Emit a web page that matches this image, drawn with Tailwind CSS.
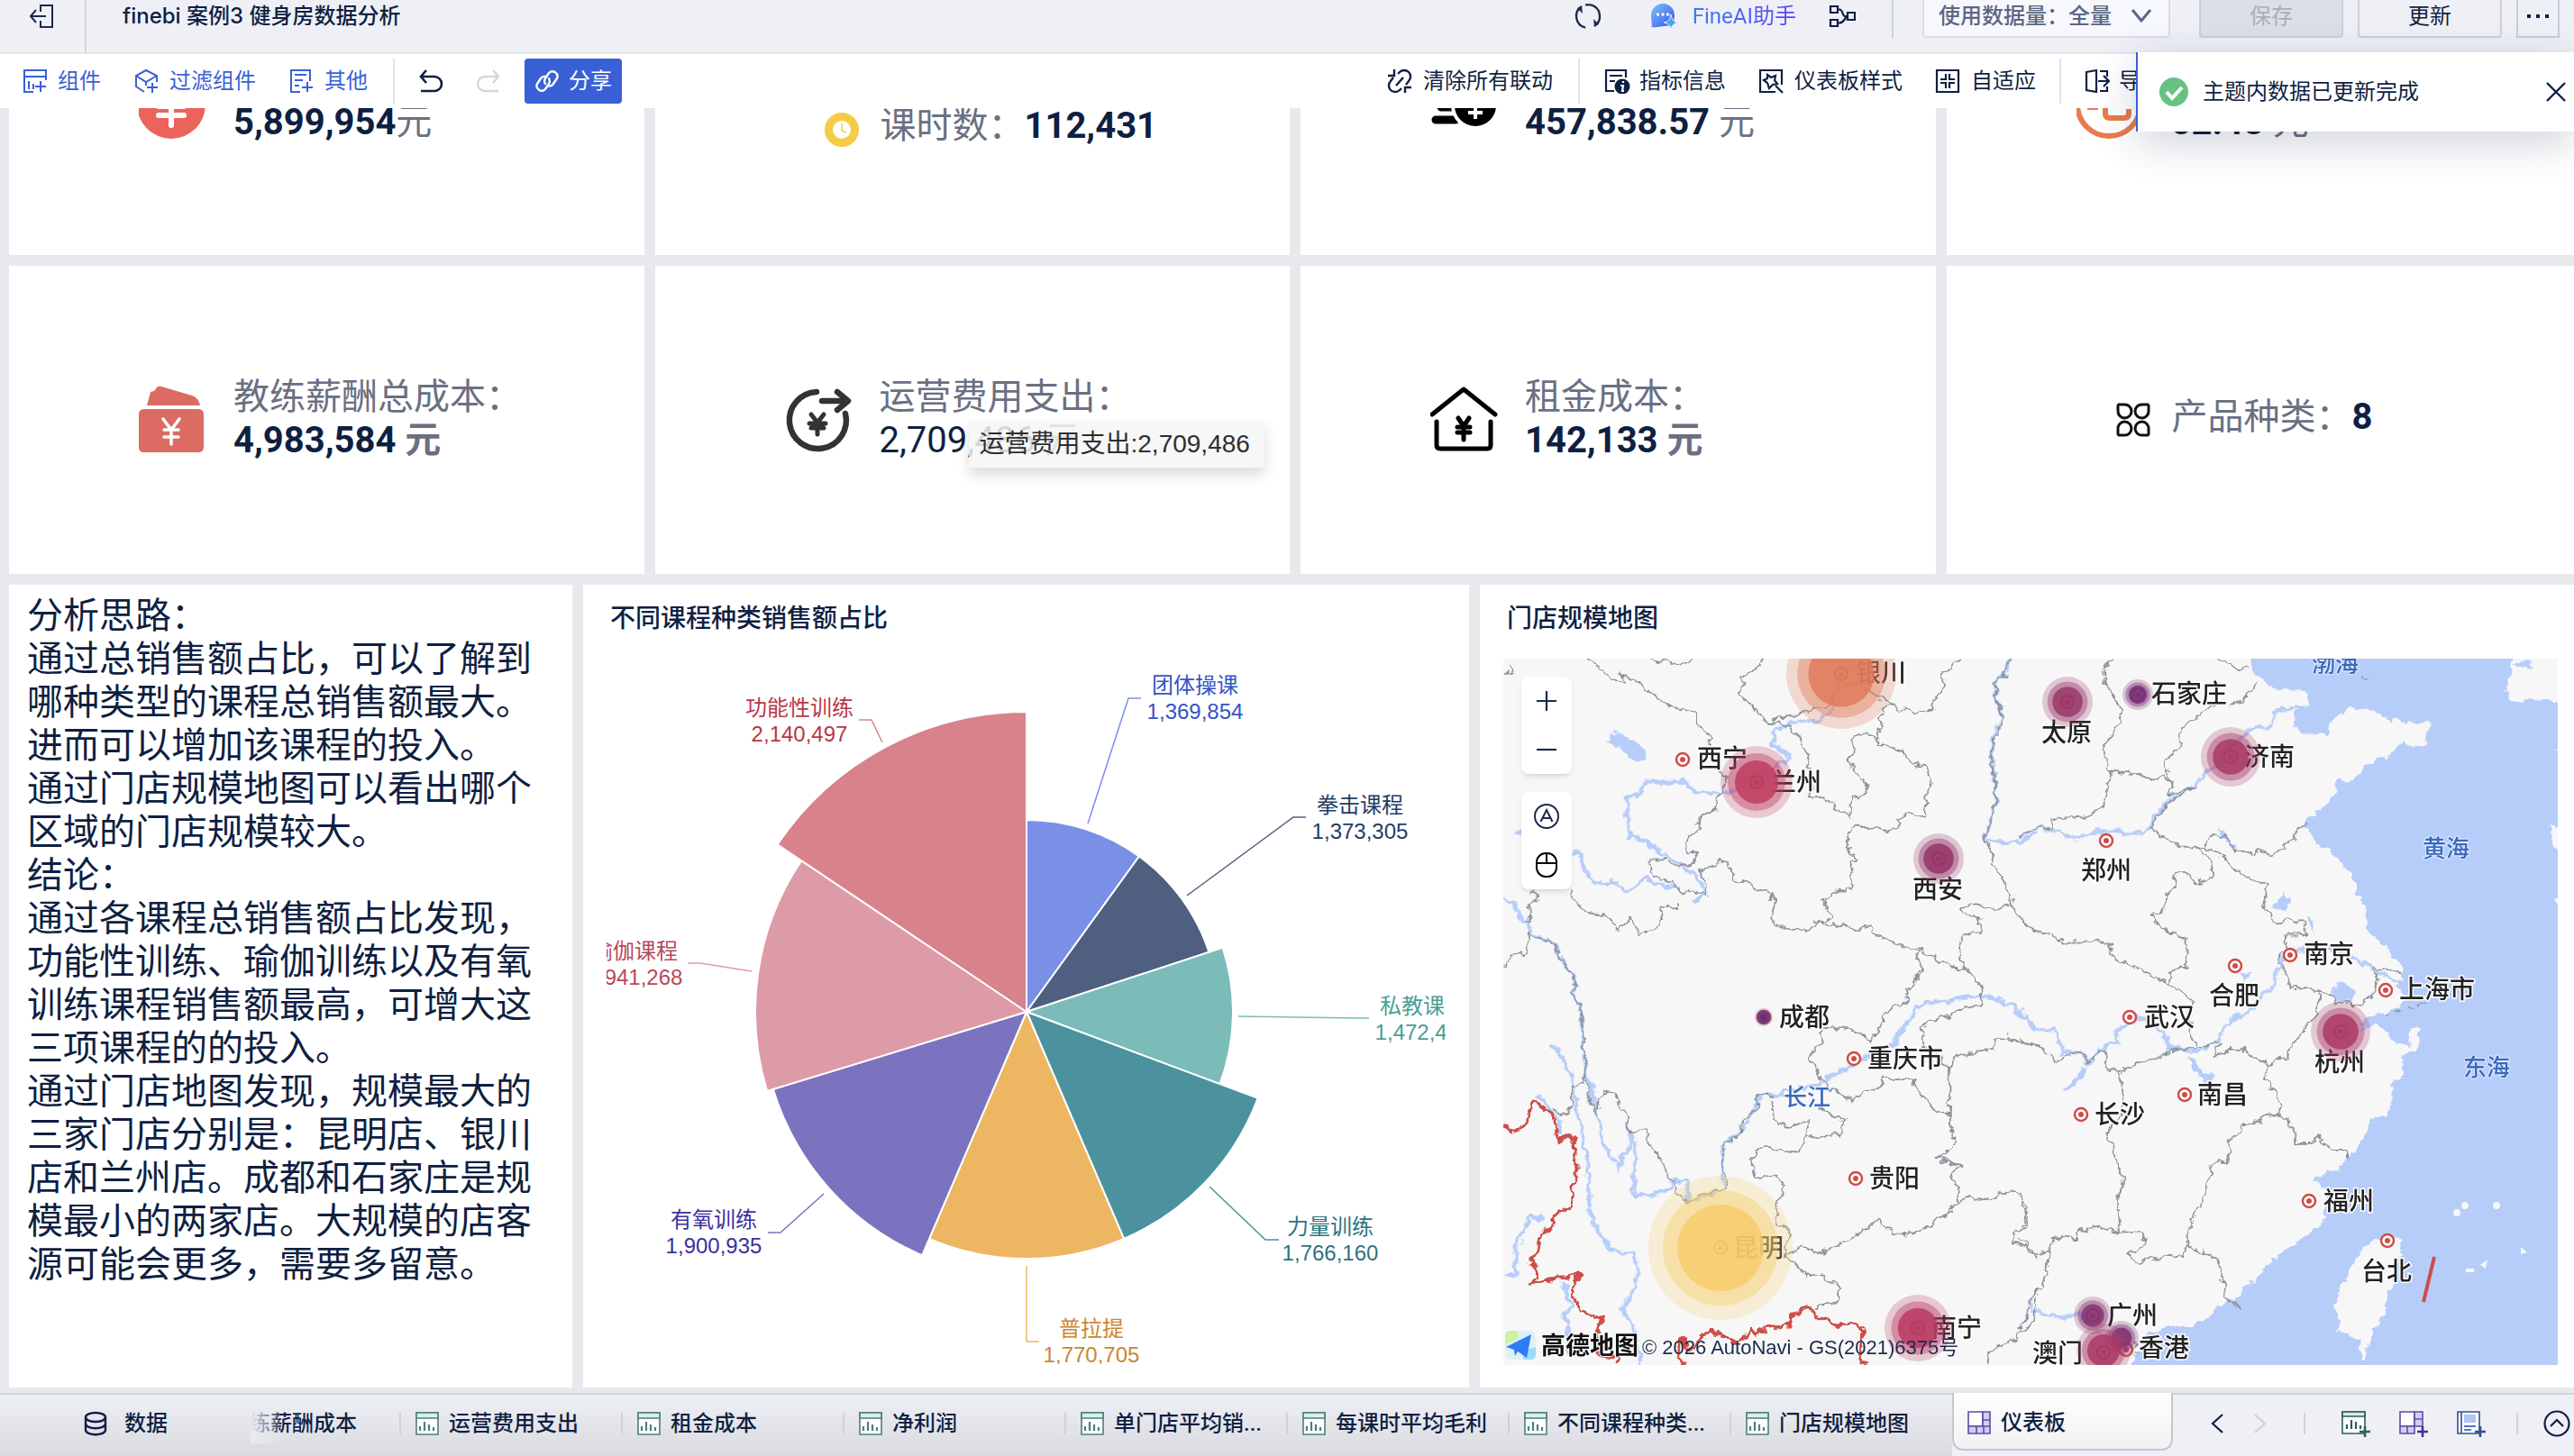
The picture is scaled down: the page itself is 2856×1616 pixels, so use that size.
<!DOCTYPE html>
<html lang="zh-CN">

<head>
    <meta charset="UTF-8">
    <meta name="viewport" content="width=device-width, initial-scale=1.0">
    <script src="https://cdn.jsdelivr.net/npm/@tailwindcss/browser@4"></script>
    <title>finebi 案例3 健身房数据分析</title>
</head>

<body class="flex h-screen flex-col overflow-hidden bg-[#e8e9ed] font-['Roboto','Noto_Sans_CJK_SC',sans-serif] text-2xl text-[#0f1f42]">

    <!-- Header -->
    <header class="z-10 h-[60px] shrink-0 border-b-2 border-[#e4e6ec] bg-[#eff0f6]">
        <div class="flex h-9 items-center whitespace-nowrap">
            <button class="flex h-[58px] w-24 shrink-0 items-center self-start border-r-2 border-[#d3d5dc] pb-[22px] pl-8" aria-label="退出">
                <svg class="size-7" viewBox="0 0 28 28" fill="none" stroke="#1b2a4c" stroke-width="2">
                    <path d="M13 9V2h13v24H13v-7M19 14H3M8 7l-6 7 6 7" />
                </svg>
            </button>
            <h1 class="ml-10 font-['Inter','Noto_Sans_CJK_SC',sans-serif] font-medium">finebi 案例3 健身房数据分析</h1>

            <div class="ml-auto flex items-center pr-4">
                <button aria-label="刷新">
                    <svg class="size-8" viewBox="0 0 32 32" fill="none" stroke="#1b2a4c" stroke-width="2.4">
                        <path d="M9 5A13 13 0 0 0 13 28.600M23 27A13 13 0 0 0 19 3.400M13 3.400L19 3.400" />
                        <path d="M4 7l5-2 1 8zM28 25l-5 2-1-8z" fill="#1b2a4c" stroke="none" />
                    </svg>
                </button>
                <button class="ml-[54px] flex items-center gap-4">
                    <svg class="size-[30px]" viewBox="0 0 30 30">
                        <defs>
                            <linearGradient id="ai" x1="0" y1="0" x2="1" y2="1">
                                <stop offset="0" stop-color="#7cc6f8" />
                                <stop offset="1" stop-color="#3551f0" />
                            </linearGradient>
                        </defs>
                        <path d="M0 27c2-2 0-5 0-13a13 13 0 0 1 26 0c0 8-4 12-11 12-5 0-8 2-15 1z" fill="url(#ai)" />
                        <circle cx="7.500" cy="13" r="1.700" fill="#fff" />
                        <circle cx="13" cy="13" r="1.700" fill="#fff" />
                        <circle cx="18.500" cy="13" r="1.700" fill="#fff" />
                        <path d="M22 13c1 6 3 8 8 9-5 1-7 3-8 8-1-5-3-7-8-8 5-1 7-3 8-9z" fill="#46a6f5" stroke="#eff0f6" />
                    </svg>
                    <span class="bg-linear-to-r from-[#3b7bf6] to-[#5a3ff2] bg-clip-text text-transparent">FineAI助手</span>
                </button>
                <button class="ml-9" aria-label="血缘">
                    <svg class="size-[30px]" viewBox="0 0 30 30" fill="none" stroke="#0f1f42" stroke-width="2.200">
                        <path d="M2 4h8v7H2zM2 19h8v7H2zM21 11h8v8h-8zM10 7.500h2c4 0 3 7.500 6 7.500s-2 7.500-6 7.500h-2M17 15h4" />
                    </svg>
                </button>
                <span class="ml-10 h-12 w-0.5 bg-[#cfd2da]"></span>
                <label class="relative ml-8 flex items-center">
                    <span class="sr-only">使用数据量</span>
                    <select class="h-12 w-[275px] appearance-none rounded border-2 border-[#dadde8] bg-[#f7f8fd] pl-4 font-medium text-[#5b6683]">
                        <option>使用数据量：全量</option>
                    </select>
                    <svg class="absolute right-5 h-5 w-6" viewBox="0 0 24 20" fill="none" stroke="#5b6683" stroke-width="3">
                        <path d="M2 3l10 12L22 3" />
                    </svg>
                </label>
                <button class="ml-8 h-12 w-40 rounded border-2 border-[#cdd0d8] bg-[#dcdfe7] text-[#a9aebb]" disabled>保存</button>
                <button class="ml-4 h-12 w-40 rounded border-2 border-[#cdd0d8]">更新</button>
                <button class="ml-4 flex h-12 w-12 items-center justify-center border-2 border-[#c6cedb]" aria-label="更多">
                    <svg class="h-1 w-6" viewBox="0 0 24 4" fill="#0f1f42">
                        <path d="M0 0h4v4H0zM10 0h4v4h-4zM20 0h4v4h-4z" />
                    </svg>
                </button>
            </div>
        </div>
    </header>

    <!-- Toolbar -->
    <div class="z-10 flex h-[60px] shrink-0 items-center bg-white pl-6 whitespace-nowrap">
        <div class="flex items-center gap-9 text-[#3a5fd7]">
            <button class="flex items-center gap-3">
                <svg class="size-7" viewBox="0 0 28 28" fill="none" stroke="currentColor" stroke-width="2">
                    <path d="M27 13V2H3v24h10M3 9h24M8 14v9M13 17v6M21 14v12M15 20h12" />
                </svg>组件
            </button>
            <button class="flex items-center gap-3">
                <svg class="size-7" viewBox="0 0 28 28" fill="none" stroke="currentColor" stroke-width="2">
                    <path d="M26 15V8L14 2 3 8v12l9 6M3 8l11 7 12-7M14 15v4M21 16v11M15 21h12" />
                </svg>过滤组件
            </button>
            <button class="flex items-center gap-3">
                <svg class="size-7" viewBox="0 0 28 28" fill="none" stroke="currentColor" stroke-width="2">
                    <path d="M24 14V2H3v24h10M7 7h13M7 13h9M7 19h5M21 15v11M15 21h12" />
                </svg>其他
            </button>
        </div>
        <span class="ml-7 h-[50px] w-0.5 bg-[#e4e6ea]"></span>
        <button class="ml-[26px]" aria-label="撤销">
            <svg class="size-7" viewBox="0 0 28 28" fill="none" stroke="#0f1f42" stroke-width="2.600">
                <path d="M9 2L3 9l6 7M3 9h15a8 8 0 0 1 0 16H3" />
            </svg>
        </button>
        <button class="ml-9" aria-label="重做" disabled>
            <svg class="size-7" viewBox="0 0 28 28" fill="none" stroke="#d3d6dc" stroke-width="2.400">
                <path d="M19 2l6 7-6 7M25 9H10a8 8 0 0 0 0 16h15" />
            </svg>
        </button>
        <button class="ml-[26px] flex h-[50px] items-center gap-2.5 rounded bg-[#3a60d7] px-[11px] text-white">
            <svg class="size-7" viewBox="0 0 28 28" fill="none" stroke="currentColor" stroke-width="2.400" stroke-linecap="round">
                <path d="M12 17a6 6 0 0 1 0-6l4-6a5.500 5.500 0 0 1 9 6l-4 6a5 5 0 0 1-6 2M16 11a6 6 0 0 1 0 6l-4 6a5.500 5.500 0 0 1-9-6l4-6a5 5 0 0 1 5-2" />
            </svg>分享
        </button>

        <div class="ml-auto flex items-center pr-[457px]">
            <button class="flex items-center gap-3">
                <svg class="size-7" viewBox="0 0 28 28" fill="none" stroke="currentColor" stroke-width="2.400">
                    <path d="M12 6l2-2a7 7 0 0 1 10 10l-3 4M16 22l-2 2A7 7 0 0 1 4 14l3-4M18 10l-8 9M8 1v7H1M20 27v-6h7" />
                </svg>清除所有联动
            </button>
            <span class="ml-7 h-[50px] w-0.5 bg-[#e0e2e8]"></span>
            <button class="ml-[26px] flex items-center gap-2.5">
                <svg class="h-7 w-[30px]" viewBox="0 0 30 28" fill="none" stroke="currentColor" stroke-width="2.200">
                    <path d="M25 10V2H3v23h9M7 8h14M7 14h6" />
                    <circle cx="21" cy="20" r="8.500" fill="#0f1f42" stroke="none" />
                    <path d="M22 14v2M19 19h3l-1 6h2" stroke="#fff" />
                </svg>指标信息
            </button>
            <button class="ml-9 flex items-center gap-3">
                <svg class="size-7" viewBox="0 0 28 28" fill="none" stroke="currentColor" stroke-width="2.200">
                    <path d="M26 18V2H2v24h17M10 7l4 3 5-2-1 5 3 4-5 1-4 4-2-6-4-3 4-2zM19 19l8 8" />
                </svg>仪表板样式
            </button>
            <button class="ml-9 flex items-center gap-3">
                <svg class="size-7" viewBox="0 0 28 28" fill="none" stroke="currentColor" stroke-width="2.200">
                    <path d="M2 2h24v24H2zM12 6v6H6M16 6v6h6M12 22v-6H6M16 22v-6h6" />
                </svg>自适应
            </button>
            <span class="ml-[26px] h-[50px] w-0.5 bg-[#e0e2e8]"></span>
            <button class="ml-[26px] flex items-center gap-2.5">
                <svg class="size-7" viewBox="0 0 28 28" fill="none" stroke="currentColor" stroke-width="2.200">
                    <path d="M2 4l11-2v24L2 24zM17 3h8v6M17 25h8v-5M15 14h12M21 8l6 6-6 6" />
                </svg>导出
            </button>
        </div>
    </div>

    <!-- Dashboard -->
    <main class="-mt-[179px] -mr-2 flex flex-1 flex-col gap-3 pb-1.5 pl-2.5">
        <section class="grid grid-cols-4 gap-3 text-[40px] leading-[48px] text-[#6a7082]">
            <div class="flex h-[342px] items-center gap-[29px] bg-white pl-36">
                <svg class="mt-2 size-[76px]" viewBox="0 0 76 76" fill="none">
                    <circle cx="36" cy="38" r="38" fill="#ec635c" />
                    <path d="M26 14l10 14 10-14M36 28v33M22 40h28M22 50h28" stroke="#fff" stroke-width="6" stroke-linecap="round" />
                </svg>
                <p>&nbsp;<br><b class="text-[#0f1f42]">5,899,954</b>元</p>
            </div>
            <div class="flex h-[342px] items-center gap-6 bg-white pt-14 pl-[188px]">
                <svg class="mt-2 size-[38px]" viewBox="0 0 38 38" fill="none">
                    <circle cx="19" cy="19" r="14.500" stroke="#f6cb45" stroke-width="9" />
                    <path d="M19 12v8l5 2" stroke="#f6cb45" stroke-width="1.600" />
                </svg>
                <p>课时数：<b class="text-[#0f1f42]">112,431</b></p>
            </div>
            <div class="flex h-[342px] items-center gap-[29px] bg-white pl-36">
                <svg class="size-[76px]" viewBox="0 0 76 76" fill="none">
                    <path d="M12 45h24M6 59h22" stroke="#000" stroke-width="9" stroke-linecap="round" />
                    <circle cx="50" cy="43" r="25" fill="#000" stroke="#fff" stroke-width="4" />
                    <path d="M43 26l7 10 7-10M50 36v22M42 43h16M42 51h16" stroke="#fff" stroke-width="4" />
                </svg>
                <p>&nbsp;<br><b class="text-[#0f1f42]">457,838.57</b> 元</p>
            </div>
            <div class="flex h-[342px] items-center gap-[29px] bg-white pl-36">
                <svg class="mt-2 size-[76px]" viewBox="0 0 76 76" fill="none" stroke="#e67c4d" stroke-width="6">
                    <circle cx="36" cy="38" r="35" />
                    <path d="M12 41h12M32 28v20q0 5 5 5h16q5 0 5-5v-5" />
                </svg>
                <p>&nbsp;<br><b class="text-[#0f1f42]">52.48</b> 元</p>
            </div>

            <div class="flex h-[342px] items-center gap-[29px] bg-white pl-36">
                <svg class="size-[76px]" viewBox="0 0 76 76">
                    <path d="M9 22l4-15 4-1 3-4q2-2 5-1l34 10q8 3 9 11zM6 26h60q6 0 6 6v36q0 6-6 6H6q-6 0-6-6V32q0-6 6-6z" fill="#db6b63" />
                    <path d="M27 37l9 12 9-12M36 49v16M28 49h16M28 57h16" fill="none" stroke="#fff" stroke-width="3.500" stroke-linecap="round" />
                </svg>
                <p class="pb-0.5">教练薪酬总成本：<br><b><span class="text-[#0f1f42]">4,983,584</span> 元</b></p>
            </div>
            <div class="relative flex h-[342px] items-center gap-[29px] bg-white pl-36">
                <svg class="size-[76px]" viewBox="0 0 76 76" fill="none" stroke="#333" stroke-width="6.500" stroke-linecap="round" stroke-linejoin="round">
                    <path d="M35 7A31.500 31.500 0 1 0 67 31M41 17h28M58 7l12 10-12 10" />
                    <path d="M29 32l7 9 7-9M36 41v13M27 42h18M29 47h14" stroke-width="5" />
                </svg>
                <p class="pb-0.5">运营费用支出：<br><span class="text-[#0f1f42]">2,709,486</span> 元</p>
                <!-- hover tip -->
                <div class="absolute top-[172px] left-[348px] w-[328px] bg-[#f6f6f7]/85 px-3 py-2 font-['Liberation_Sans','Noto_Sans_CJK_SC',sans-serif] text-[28px] leading-9 text-[#2e2e2e] shadow-[0_8px_14px_rgba(0,0,0,0.14)]" role="tooltip">运营费用支出:2,709,486</div>
            </div>
            <div class="flex h-[342px] items-center gap-[29px] bg-white pl-36">
                <svg class="size-[76px]" viewBox="0 0 76 76" fill="none" stroke="#000" stroke-width="5" stroke-linecap="round" stroke-linejoin="round">
                    <path d="M2 32L37 4l35 28M7 40v26q0 4 4 4h52q4 0 4-4V40" />
                    <path d="M31 36l6 9 6-9M37 45v15M30 46h14M30 52h14" />
                </svg>
                <p class="pb-0.5">租金成本：<br><b><span class="text-[#0f1f42]">142,133</span> 元</b></p>
            </div>
            <div class="flex h-[342px] items-center gap-6 bg-white pl-[188px]">
                <svg class="size-[38px]" viewBox="0 0 38 38" fill="none" stroke="#111" stroke-width="3">
                    <path d="M3 2h6a7.500 7.500 0 1 1-7 7V3zM35 2h-6a7.500 7.500 0 1 0 7 7V3zM3 36h6a7.500 7.500 0 1 0-7-7v6zM35 36h-6a7.500 7.500 0 1 1 7-7v6z" />
                </svg>
                <p class="pb-1.5">产品种类：<b class="text-[#0f1f42]">8</b></p>
            </div>
        </section>

        <section class="grid flex-1 grid-cols-[625fr_983fr_1222fr] gap-3">
            <article class="bg-white px-5 py-[11px] text-[40px] leading-[48px]">
                <p>分析思路：</p>
                <p>通过总销售额占比，可以了解到哪种类型的课程总销售额最大。</p>
                <p>进而可以增加该课程的投入。</p>
                <p>通过门店规模地图可以看出哪个区域的门店规模较大。</p>
                <p>结论：</p>
                <p>通过各课程总销售额占比发现，功能性训练、瑜伽训练以及有氧训练课程销售额最高，可增大这三项课程的的投入。</p>
                <p>通过门店地图发现，规模最大的三家门店分别是：昆明店、银川店和兰州店。成都和石家庄是规模最小的两家店。大规模的店客源可能会更多，需要多留意。</p>
            </article>

            <article class="bg-white px-[26px] pt-[18px]">
                <h2 class="pl-1 text-[28px] leading-10 font-medium">不同课程种类销售额占比</h2>
                <svg id="pie" class="mt-6 w-full font-['Liberation_Sans','Noto_Sans_CJK_SC',sans-serif] text-2xl" viewBox="673 731 931 783" text-anchor="middle" role="img" aria-label="不同课程种类销售额占比"></svg>
            </article>

            <article class="bg-white px-[26px] pt-[18px]">
                <h2 class="pl-1 text-[28px] leading-10 font-medium">门店规模地图</h2>
                <div class="relative mt-6">
                    <svg class="w-full" viewBox="1668 731 1170 784" role="img" aria-label="门店规模地图">
                        <defs>
                            <filter id="rough" filterUnits="userSpaceOnUse" x="1600" y="680" width="1300" height="900">
                                <feTurbulence type="fractalNoise" baseFrequency="0.09" numOctaves="3" seed="4" />
                                <feDisplacementMap in="SourceGraphic" scale="12" xChannelSelector="R" yChannelSelector="G" />
                            </filter>
                        </defs>
                        <rect x="1668" y="731" width="1170" height="784" fill="#f7f7f7" />
                        <g filter="url(#rough)" fill="none" stroke-linejoin="round">
                            <!-- sea, coast and islands -->
                            <g transform="translate(2240 700) scale(0.39286 0.5357)">
                                <path fill="#b6cdfa" d="M650 30L650 58 660 85 690 100 720 120 810 125 815 155 780 170 780 200 810 215 870 215 885 185 940 155 1000 165 1045 185 1155 192 1145 240 1085 235 1060 250 975 280 950 310 900 310 905 330 855 365 820 385 808 410 835 430 895 470 940 510 975 570 985 620 1040 660 1085 700 1085 725 1060 740 1100 755 1075 780 1010 795 975 800 965 830 1010 815 1045 830 1065 860 1100 860 1105 820 1130 820 1125 870 1085 880 1085 920 1055 935 1055 965 1040 1000 1000 1010 955 1070 935 1090 900 1115 830 1140 875 1160 860 1200 870 1215 830 1240 790 1265 740 1290 700 1315 680 1335 640 1360 610 1385 560 1400 540 1425 470 1445 400 1445 360 1465 345 1480 330 1500 300 1580 1580 1580 1580 30Z" />
                                <path fill="#f7f7f7" d="M1395 30L1395 80 1370 125 1400 150 1475 140 1510 150 1580 150 1580 30ZM1580 550L1515 560 1580 580ZM1580 400L1500 405 1510 450 1580 470ZM1580 230L1510 250 1580 260ZM1000 1260L1060 1255 1085 1262 1075 1300 1050 1360 1040 1410 1000 1450 975 1510 965 1510 960 1470 905 1450 895 1400 920 1345 960 1290Z" />
                                <path fill="#b6cdfa" d="M885 745L905 725 950 745 940 770 910 770 890 760ZM720 575L745 540 770 565 750 580ZM485 880L500 885 520 915 560 915 530 940 490 910ZM620 710L665 712 640 725ZM190 900L180 925 150 945 130 950 165 920ZM560 405L580 415 600 440 620 450 600 455ZM815 590L830 600 832 630ZM1400 70L1440 60 1450 80Z" />
                            </g>
                            <!-- west rivers and lakes -->
                            <g transform="translate(1640 700) scale(0.3954 0.5357)" stroke="#b6cdfa" stroke-width="4">
                                <path vector-effect="non-scaling-stroke" d="M600 558L645 545 600 500 520 465 480 440 425 425 415 350 450 340 475 310 540 315 575 308 610 335 700 340 770 300 840 285 870 260 830 235 825 212 880 190 960 185 990 165 1010 110 1060 58M265 465L285 460 300 495 330 525 375 520 420 540 470 510 495 525 560 530M71 555L100 565 140 620 215 650 240 690 280 735 260 750 290 790 300 900 335 1005 345 1050 390 1110 420 1080 430 1040 445 1080 435 1165 485 1170 540 1155 545 1140 585 1140 590 1185 690 1155 685 1070 745 1035 785 970 860 955 975 935 1010 915 1085 885 1160 860 1240 775 1350 762 1430 758 1490 775 1520 790 1568 825M200 855L235 880 265 930 285 1020 305 1080 312 1195 330 1240 385 1290 430 1290 450 1310 440 1360 405 1410 440 1450 455 1520M165 960L230 1015 230 1045M71 1335L105 1335 105 1280 150 1210 180 1220M235 1350L265 1400 240 1415 255 1450 250 1500M1495 58L1475 90 1450 110 1455 150 1475 180 1440 230 1445 300 1455 350 1420 435 1520 440 1568 420" />
                                <path fill="#b6cdfa" stroke="none" d="M360 235L375 210 415 210 440 235 470 245 465 270 420 262 395 240ZM100 420L130 405 130 430Z" />
                            </g>
                            <!-- east rivers -->
                            <g transform="translate(2240 700) scale(0.39286 0.5357)" stroke="#b6cdfa" stroke-width="4">
                                <path vector-effect="non-scaling-stroke" d="M0 430L60 405 160 430 230 415 360 422 375 395 430 350 490 325 540 285 600 240 650 205 715 195 720 170 760 158 810 160M0 785L40 825 100 825 125 875 175 875 195 895 250 860 280 850 270 830 300 820 330 800 390 815 430 865 495 870 555 855 585 815 655 785 690 750 720 740 735 690 765 665 860 655 940 675 1000 700 1085 735M30 1390L35 1410 120 1425 165 1415 205 1440" />
                            </g>
                            <!-- province borders, west -->
                            <g transform="translate(1640 700) scale(0.3954 0.5357)" stroke="#8d939c" stroke-width="1.800">
                                <path vector-effect="non-scaling-stroke" d="M310 58L345 80 375 100 415 112 400 88 450 108 480 125 520 150 560 160 605 170 615 195 640 205 660 218 645 235 680 290 690 300 690 335 670 345 665 370 630 380 615 400 620 415 590 430 590 455 615 460 600 485 560 490 520 475 475 475 485 500 510 515 545 520 570 545 600 540 645 545 640 520 620 500 685 475 710 490 712 515 750 520 775 535 815 540 830 560 825 600 860 615 895 622 940 615 960 605 990 595 965 555 990 545 1045 535 1050 505 1045 480 1065 470 1030 450 1050 405 1100 405 1150 415 1185 400 1175 385 1255 380 1258 345 1270 310 1250 280 1210 275 1195 250 1130 235 1120 220 1080 215 1045 225 1060 245 1035 270 1060 295 1095 320 1080 340 1050 350 1045 385 1000 370 985 350 930 340 940 320 935 290 925 255 905 225 860 195 815 190 770 160 735 130 740 98 790 75 798 58" />
                                <path vector-effect="non-scaling-stroke" d="M815 190L860 178 930 165 975 155 1010 130 1060 105 1110 130 1150 148 1190 165 1230 170 1275 165 1280 135 1300 130 1305 90 1330 75 1355 60M1150 148L1125 180 1130 200 1125 235M490 58L530 65 570 72 600 60M71 88L100 85 90 70M1495 58L1475 90 1450 110 1455 150 1475 180 1460 215 1440 230 1445 300 1455 350 1435 400 1420 435 1435 450 1445 480 1470 510 1490 540 1500 570 1440 575 1400 570 1345 575 1370 590 1410 600 1415 622 1365 630 1350 655 1360 700M1500 570L1530 600 1568 625" />
                                <path vector-effect="non-scaling-stroke" d="M940 605L1010 605 1060 620 1100 615 1120 635 1150 640 1200 658 1240 660 1290 680 1330 700 1360 700 1395 720 1418 750 1410 775 1350 785 1320 800 1280 805 1245 815 1250 860 1290 880 1320 915M1240 660L1230 690 1250 705 1225 725 1205 745 1200 770 1150 785 1130 820 1100 850 1060 830 990 822 955 830 970 855 940 870 930 890 955 910 970 935 1010 960 1050 975 1080 960 1120 945 1140 925 1170 930 1220 930 1235 960 1260 975 1290 1000 1320 1000 1325 960 1320 915 1340 880 1380 875 1450 865 1450 850 1485 840 1510 855 1568 858M260 535L275 560 300 580 345 590 375 600 395 620 430 595 460 630 510 610 515 570 560 575 570 560M71 700L90 675 130 665 140 625 215 650 240 690 280 735 260 750 290 790 300 870 305 930 320 985 335 1000 335 975 360 950 385 965 410 1000 430 1040 465 1030 500 1085 540 1130 560 1165 590 1185 640 1165 690 1155 700 1140 685 1105 690 1070 740 1040 745 1010 780 990 785 965 830 965M150 540L170 555 140 570 155 590 135 610M300 920L295 940 265 940 265 990 235 1000 215 990" />
                                <path vector-effect="non-scaling-stroke" d="M825 975L830 1010 860 1030 925 1015 925 1050 1020 1040 1030 1015 990 1005 960 990M925 1050L890 1080 850 1075 790 1070 765 1095 775 1135 835 1130 860 1150 835 1190 840 1225 875 1250 860 1280 870 1300 920 1335 975 1340 1015 1360 1005 1390 950 1405M860 1300L910 1270 950 1290 1010 1275 1060 1250 1090 1240 1120 1220 1150 1240 1200 1252 1260 1235 1330 1200 1345 1185 1345 1150 1325 1130 1355 1105 1320 1100 1285 1095 1340 1060 1325 1020 1325 980M1345 1185L1380 1170 1430 1180 1490 1160 1525 1165 1530 1195 1545 1210 1540 1235 1500 1250 1500 1270 1540 1275 1568 1295M1568 1380L1560 1430 1500 1470 1435 1495 1430 1520" />
                                <path vector-effect="non-scaling-stroke" stroke="#cf4d48" stroke-width="3.500" d="M71 1023L103 1040 130 1020 140 1005 155 975 210 1005 228 1060 240 1050 268 1055 275 1135 262 1160 265 1195 240 1200 210 1220 205 1240 172 1250 165 1290 150 1310 170 1335 150 1355 230 1340 285 1335 262 1360 285 1410 350 1425 340 1440 330 1490 340 1500 395 1505 390 1520M575 1520L555 1500 570 1470 595 1490 650 1450 690 1460 725 1475 765 1445 780 1460 810 1445 875 1440 880 1420 925 1400 970 1425 1000 1440 1045 1435 1080 1448 1070 1475 1070 1515 1102 1518" />
                            </g>
                            <!-- province borders, east -->
                            <g transform="translate(2240 700) scale(0.39286 0.5357)" stroke="#8d939c" stroke-width="1.800">
                                <path vector-effect="non-scaling-stroke" d="M270 58L240 80 240 110 295 165 275 205 240 245 255 290 245 360 220 370 190 385 90 390 90 410 60 405 0 430M255 290L330 295 385 310 410 300 430 315 420 340 495 325 430 355 370 405 405 425 440 445 500 450 520 445 540 420 585 425 610 455 655 460 700 455 710 468 735 460 760 435 780 430 790 405 820 405M430 315L415 270 450 240 460 200 500 180 560 155M595 150L630 150 675 108M560 60L600 75 645 80" />
                                <path vector-effect="non-scaling-stroke" d="M500 450L545 480 545 510 500 525 480 500 445 500 440 530 415 545 415 575 375 590 400 615 430 625 475 640 475 695 430 705 420 730M520 445L580 470 600 490 655 515 700 525 690 570 720 605 780 600 805 600 810 630 750 630 755 660 725 690 760 710 765 740 850 745 845 790 810 825 780 850 760 880 705 900 640 870 600 865 550 885 570 855 500 860 480 825 490 765 420 730 340 700 270 680 255 645 180 645 130 645 75 630 40 620 0 590" />
                                <path vector-effect="non-scaling-stroke" d="M0 850L30 855 75 870 105 890 175 875 195 895 240 870 250 905 285 915 310 905 370 890 430 870 500 865M285 915L295 960 290 1000 245 1040 270 1080 295 1140 280 1180 285 1230 280 1245 225 1235 175 1245 160 1262 100 1258 85 1285 30 1290 25 1265 0 1260M705 900L695 930 730 960 735 1000 775 1030 780 1060 830 1060 845 1050 880 1075 925 1075 935 1095M735 1000L640 1025 600 1050 590 1095 545 1110 530 1170 490 1215 470 1275 530 1290 560 1305 580 1350 590 1385 630 1405M280 1245L355 1250 350 1275 305 1295 345 1308 430 1295 465 1300 470 1275M85 1285L80 1330 65 1355 20 1400 15 1430 0 1450M850 750L885 755 900 770 950 775 1000 760 1010 745 1010 720 1000 695 1085 710M0 1170L30 1195 15 1230 0 1235" />
                                <path vector-effect="non-scaling-stroke" stroke-dasharray="8 6" d="M1025 793L1060 790 1110 780 1165 770M970 93L995 97M330 1470L330 1500" />
                            </g>
                        </g>
                        <g fill="#f7f7f7">
                            <circle cx="2726" cy="1346" r="4" />
                            <circle cx="2735" cy="1338" r="4" />
                            <circle cx="2770" cy="1338" r="4" />
                            <path d="M2736 1408h9v4h-9zM2752 1404l8-6-2 10zM2797 1384l7 6-7 2z" />
                        </g>
                        <path d="M2701 1395L2689 1445" stroke="#cf4d48" stroke-width="4" />
                        <g id="cities" class="text-[28px] font-medium"></g>
                        <g id="stores"></g>
                        <!-- provider mark -->
                        <rect x="1670" y="1477" width="34" height="32" rx="6" fill="#dff0f5" />
                        <path d="M1670 1492v-9q0-6 6-6h8v9z" fill="#c9f2a3" />
                        <path d="M1704 1495v8q0 6-6 6h-8v-10z" fill="#9adcfb" />
                        <path d="M1671 1495l28-14-5 26-10-7-3 5-1-7z" fill="#2f7bf6" />
                        <text x="1710" y="1503" class="text-[27px] font-bold" fill="#111" stroke="#fff" stroke-width="2" paint-order="stroke">高德地图</text>
                        <text x="1822" y="1503" class="font-['Liberation_Sans','Noto_Sans_CJK_SC',sans-serif] text-[22px]" fill="#1b2a4c">© 2026 AutoNavi - GS(2021)6375号</text>
                    </svg>

                    <div class="absolute top-5 left-5 flex flex-col gap-5">
                        <div class="flex h-[108px] w-14 flex-col items-center justify-around rounded-lg bg-white shadow-md">
                            <button aria-label="放大">
                                <svg class="size-6" viewBox="0 0 24 24" stroke="#1b2a4c" stroke-width="2.200">
                                    <path d="M1 12h22M12 1v22" />
                                </svg>
                            </button>
                            <button aria-label="缩小">
                                <svg class="size-6" viewBox="0 0 24 24" stroke="#1b2a4c" stroke-width="2.200">
                                    <path d="M1 12h22" />
                                </svg>
                            </button>
                        </div>
                        <div class="flex h-[108px] w-14 flex-col items-center justify-around rounded-lg bg-white shadow-md">
                            <button aria-label="自动定位">
                                <svg class="size-7" viewBox="0 0 28 28" fill="none" stroke="#1b2a4c" stroke-width="2">
                                    <path d="M7.500 20L14 7l6.500 13M10 16h8" />
                                    <circle cx="14" cy="14" r="13" />
                                </svg>
                            </button>
                            <button aria-label="滚轮缩放">
                                <svg class="size-7" viewBox="0 0 28 28" fill="none" stroke="#000" stroke-width="2">
                                    <rect x="3" y="1" width="22" height="26" rx="10" />
                                    <path d="M3 12h22M14 1v11" />
                                </svg>
                            </button>
                        </div>
                    </div>
                </div>
            </article>
        </section>
    </main>

    <!-- Sheet tabs -->
    <footer class="flex h-[70px] shrink-0 items-center border-t-2 border-[#ccd4da] bg-linear-to-b from-[#eff0f7] to-[#d9dade] font-medium whitespace-nowrap">
        <button class="ml-[92px] flex w-[186px] shrink-0 items-center gap-[18px] pb-1">
            <svg class="size-7" viewBox="0 0 28 28" fill="none" stroke="#0f1f42" stroke-width="2.400">
                <ellipse cx="14" cy="7" rx="11" ry="5" />
                <path d="M3 7v14c0 7 22 7 22 0V7M3 14c0 7 22 7 22 0" />
            </svg>数据
        </button>
        <nav id="tabs" class="relative flex h-full min-w-0 flex-1 items-center overflow-hidden">
            <div class="pointer-events-none absolute left-0 h-10 w-8 bg-linear-to-r from-[#e9ebf0] to-[#e9ebf0]/20"></div>
        </nav>
        <div class="flex h-full shrink-0 items-center bg-[#eff0f6] pr-1">
            <button class="-mt-0.5 flex w-[245px] items-center self-start">
                <span class="flex h-16 w-full items-center gap-[11px] rounded-b-xl border-2 border-t-0 border-[#c3c8d0] bg-linear-to-b from-white to-[#f1f1f2] pt-1 pl-[15px]">
                    <svg class="size-[26px]" viewBox="0 0 26 26" fill="#d5cdf0" stroke="#5f4aa8" stroke-width="1.600">
                        <path d="M1 1h16v16H1z" fill="#fff" />
                        <path d="M17 1h8v9h-8zM17 10h8v7h-8zM1 17h9v8H1zM10 17h8v8h-8zM18 17h7v8h-7z" />
                    </svg>仪表板
                </span>
            </button>
            <div class="flex items-center pb-1">
                <button class="ml-[41px]" aria-label="上一页">
                    <svg class="h-6 w-4" viewBox="0 0 16 24" fill="none" stroke="#0f1f42" stroke-width="2.200">
                        <path d="M14 2L3 12l11 10" />
                    </svg>
                </button>
                <button class="ml-8" aria-label="下一页" disabled>
                    <svg class="h-6 w-4" viewBox="0 0 16 24" fill="none" stroke="#cfd2d9" stroke-width="2.200">
                        <path d="M2 2l11 10L2 22" />
                    </svg>
                </button>
                <span class="ml-10 h-6 w-0.5 bg-[#cfd2da]"></span>
                <button class="ml-10" aria-label="添加组件">
                    <svg class="size-8" viewBox="0 0 32 32" fill="none" stroke="#2f5f58" stroke-width="1.600">
                        <path d="M1 3h25v24H1z" fill="#fff" />
                        <path d="M1 3h25v5H1z" fill="#d3ebe6" />
                        <path d="M6 22v-5M11 22V12M16 22v-8M21 22v-4" stroke-width="2.200" />
                        <path d="M26 19v12M20 25h12" stroke-width="2.600" />
                    </svg>
                </button>
                <button class="ml-8" aria-label="添加仪表板">
                    <svg class="size-8" viewBox="0 0 32 32" fill="#d5cdf0" stroke="#5f4aa8" stroke-width="1.600">
                        <path d="M1 3h16v16H1z" fill="#fff" />
                        <path d="M17 3h9v8h-9zM17 11h9v8h-9zM1 19h8v8H1zM9 19h8v8H9z" />
                        <path d="M26 19v12M20 25h12" stroke="#46319a" stroke-width="2.600" />
                    </svg>
                </button>
                <button class="ml-8" aria-label="添加报告">
                    <svg class="size-8" viewBox="0 0 32 32" fill="none" stroke="#33508f" stroke-width="1.600">
                        <path d="M1 3h24v24H1zM5 3v24" fill="#fff" />
                        <path d="M8 6h13v9H8z" fill="#b0c6ee" stroke="none" />
                        <path d="M8 19h13M8 23h8" stroke="#4f78c8" stroke-width="2.200" />
                        <path d="M26 19v12M20 25h12" stroke-width="2.600" />
                    </svg>
                </button>
                <span class="ml-[34px] h-6 w-0.5 bg-[#cfd2da]"></span>
                <button class="ml-7" aria-label="展开">
                    <svg class="size-[30px]" viewBox="0 0 30 30" fill="none" stroke="#0f1f42" stroke-width="2.200">
                        <circle cx="15" cy="15" r="13.500" />
                        <path d="M8 18l7-7 7 7" />
                    </svg>
                </button>
            </div>
        </div>
    </footer>

    <!-- Toast -->
    <div class="absolute top-[58px] right-0 z-20 flex h-[88px] w-[486px] items-center border-l-2 border-[#3a5fd7] bg-white pr-2 pl-6 shadow-[0_12px_48px_rgba(15,31,66,0.2)]" role="status">
        <svg class="size-8" viewBox="0 0 32 32" fill="none">
            <circle cx="16" cy="16" r="16" fill="#67c282" />
            <path d="M8 16l6 7 11-12" stroke="#fff" stroke-width="4" />
        </svg>
        <span class="ml-4">主题内数据已更新完成</span>
        <button class="ml-auto" aria-label="关闭">
            <svg class="size-6" viewBox="0 0 24 24" stroke="#0f1f42" stroke-width="2.400">
                <path d="M2 2l20 20M22 2L2 22" />
            </svg>
        </button>
    </div>

    <script>
        // Rose chart: angle follows the value, every slice has its own radius
        const CX = 1139, CY = 1123;
        const slices = [
            { name: '团体操课', value: 1369854, r: 213, fill: '#7990e6', ink: '#3653c4', at: [1326, 760], line: '1207,914 1252,775 1266,775' },
            { name: '拳击课程', value: 1373305, r: 213, fill: '#4f5f80', ink: '#263a66', at: [1509, 893], line: '1317,994 1435,907 1449,907' },
            { name: '私教课程', value: 1472455, r: 229, fill: '#7bbcb8', ink: '#4a9d94', at: [1579, 1116], line: '1374,1128 1505,1130 1519,1130' },
            { name: '力量训练', value: 1766160, r: 274, fill: '#4b929e', ink: '#2c7480', at: [1476, 1361], line: '1342,1317 1404,1376 1419,1376' },
            { name: '普拉提', value: 1770705, r: 274, fill: '#edb662', ink: '#c98730', at: [1211, 1474], line: '1139,1405 1139,1489 1153,1489' },
            { name: '有氧训练', value: 1900935, r: 294, fill: '#7b73bf', ink: '#3a2f9c', at: [792, 1353], line: '914,1325 866,1368 852,1368' },
            { name: '瑜伽课程', value: 1941268, r: 301, fill: '#dd9ba8', ink: '#b8485c', at: [704, 1055], line: '834,1078 777,1069 763,1069' },
            { name: '功能性训练', value: 2140497, r: 333, fill: '#d8828c', ink: '#b83744', at: [887, 785], line: '979,824 967,799 953,799' }
        ];
        const total = slices.reduce((sum, s) => sum + s.value, 0);
        let angle = 0;
        document.getElementById('pie').innerHTML = slices.map(s => {
            const end = angle + s.value / total * Math.PI * 2;
            const point = a => `${CX + s.r * Math.sin(a)} ${CY - s.r * Math.cos(a)}`;
            const path = `M${CX} ${CY}L${point(angle)}A${s.r} ${s.r} 0 0 1 ${point(end)}Z`;
            angle = end;
            return `<path d="${path}" fill="${s.fill}" stroke="#fff" stroke-width="2"/>
                <polyline points="${s.line}" fill="none" stroke="${s.fill}" stroke-width="1.5"/>
                <text x="${s.at[0]}" y="${s.at[1] + 9}" fill="${s.ink}">${s.name}</text>
                <text x="${s.at[0]}" y="${s.at[1] + 38}" fill="${s.ink}">${s.value.toLocaleString('en-US')}</text>`;
        }).join('');

        // name, label x, label y, anchor, marker x, marker y
        const cities = [
            ['银川', 2059, 747, 'start', 2043, 748], ['西宁', 1883, 842, 'start', 1867, 843],
            ['兰州', 1965, 868, 'start', 1949, 868], ['西安', 2150, 987, 'middle', 2151, 953],
            ['成都', 1974, 1129, 'start', 1957, 1129], ['重庆市', 2072, 1175, 'start', 2057, 1175],
            ['贵阳', 2074, 1308, 'start', 2059, 1308], ['昆明', 1923, 1385, 'start', 1909, 1385],
            ['南宁', 2143, 1474, 'start', 2128, 1474], ['郑州', 2337, 966, 'middle', 2337, 933],
            ['太原', 2293, 813, 'middle', 2294, 779], ['石家庄', 2387, 770, 'start', 2372, 771],
            ['济南', 2490, 840, 'start', 2475, 840], ['合肥', 2479, 1105, 'middle', 2480, 1072],
            ['南京', 2556, 1059, 'start', 2541, 1060], ['上海市', 2662, 1098, 'start', 2647, 1099],
            ['武汉', 2379, 1129, 'start', 2363, 1129], ['杭州', 2596, 1179, 'middle', 2597, 1145],
            ['南昌', 2438, 1215, 'start', 2424, 1215], ['长沙', 2324, 1237, 'start', 2309, 1237],
            ['福州', 2578, 1333, 'start', 2562, 1333], ['台北', 2648, 1411, 'middle', 2649, 1377],
            ['广州', 2338, 1460, 'start', 2322, 1460], ['澳门', 2255, 1502, 'start', 2334, 1501],
            ['香港', 2373, 1496, 'start', 2359, 1498]
        ];
        const waters = [['长江', 1979, 1218], ['渤海', 2565, 737], ['黄海', 2688, 942], ['东海', 2733, 1185]];
        document.getElementById('cities').innerHTML = cities.map(([name, x, y, anchor, mx, my]) =>
            `<circle cx="${mx}" cy="${my}" r="7" fill="#fff" stroke="#cf4d48" stroke-width="2.5"/>
            <circle cx="${mx}" cy="${my}" r="3" fill="#cf4d48"/>
            <text x="${x}" y="${y + 10}" text-anchor="${anchor}" fill="#222" stroke="#fff" stroke-width="3" paint-order="stroke">${name}</text>`
        ).join('') + waters.map(([name, x, y]) =>
            `<text x="${x}" y="${y + 9}" class="text-[26px]" fill="#3b69bf" stroke="#fff" stroke-opacity="0.6" stroke-width="2" paint-order="stroke">${name}</text>`
        ).join('');

        // x, y, radius, colour
        const stores = [
            [2043, 748, 61, '#df7a5b'], [1949, 868, 40, '#bd3c5f'], [2151, 953, 28, '#943468'],
            [1957, 1129, 10, '#642a78'], [1909, 1385, 80, '#f6cd6b'], [2128, 1474, 37, '#b83a63'],
            [2294, 779, 28, '#993768'], [2372, 771, 17, '#772f75'], [2475, 840, 33, '#a93a66'],
            [2597, 1145, 33, '#a93a66'], [2322, 1460, 21, '#863470'], [2354, 1485, 19, '#7c3072'],
            [2334, 1499, 30, '#a93a66']
        ];
        document.getElementById('stores').innerHTML = stores.map(([x, y, r, color]) =>
            `<g fill="${color}"><circle cx="${x}" cy="${y}" r="${r}" opacity="0.25"/>
            <circle cx="${x}" cy="${y}" r="${r * 0.8}" opacity="0.42"/>
            <circle cx="${x}" cy="${y}" r="${r * 0.6}" opacity="0.85"/></g>`
        ).join('');

        const tabs = ['教练薪酬成本', '运营费用支出', '租金成本', '净利润', '单门店平均销...', '每课时平均毛利', '不同课程种类...', '门店规模地图'];
        document.getElementById('tabs').insertAdjacentHTML('afterbegin', tabs.map((name, i) =>
            `<button class="${i ? '' : '-ml-[81px]'} flex w-[246px] shrink-0 items-center pb-1">
                <span class="h-6 w-0.5 bg-[#cfd2da]"></span>
                <svg class="mr-[11px] ml-4 size-[26px]" viewBox="0 0 26 26" fill="none" stroke="#4d7f78" stroke-width="1.6">
                    <path d="M1 1h24v24H1z" fill="#fff"/><path d="M1 1h24v6H1z" fill="#d9efeb"/>
                    <path d="M5 21v-5M10 21V11M15 21v-7M20 21v-4" stroke-width="2.200"/>
                </svg>${name}</button>`
        ).join(''));
    </script>

</body>

</html>
